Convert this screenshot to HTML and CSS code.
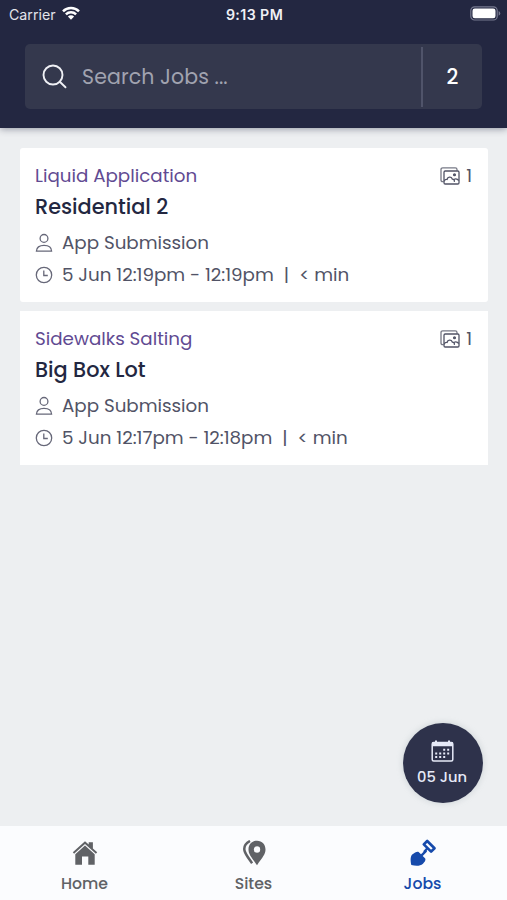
FILE: index.html
```
<!DOCTYPE html>
<html lang="en">
<head>
<meta charset="utf-8">
<meta name="viewport" content="width=device-width, initial-scale=1">
<title>Jobs</title>
<link rel="stylesheet" href="styles.css">
</head>
<body>
<svg class="defs" aria-hidden="true">
  <symbol id="user" viewBox="0 0 18 20"><circle cx="9" cy="5.4" r="3.9"/><path d="M1.400 18.200c0-3.700 3-5.900 7.600-5.900s7.600 2.200 7.600 5.900z"/></symbol>
  <symbol id="clock" viewBox="0 0 18 18"><circle cx="9" cy="9" r="7.700"/><path d="M8.800 4.500v5h4"/></symbol>
  <symbol id="photos" viewBox="0 0 20 18"><path class="back" d="M3.500 14.700H2.700Q1 14.700 1 13V2.500Q1 .8 2.800 .8h12.500q1.700 0 1.700 1.700v1.300"/><rect x="4" y="4" width="15" height="13" rx="1.200"/><path d="M4.200 14.300c.4-1.500 1.600-2.100 2.900-1.900.5-2.500 4.100-3.200 5.200-.3 1.600 0 2.400 1.400 2 2.800M13.200 13.200c1.200-1.900 3.900-1.900 5.600.3"/><circle class="dot" cx="14.500" cy="7.800" r=".9"/></symbol>
</svg>
<div class="app">
  <header class="header">
    <div class="status">
      <div class="carrier"><span>Carrier</span>
        <svg width="18" height="14" viewBox="0 0 18 14"><path d="M1 5.400a11.400 11.400 0 0 1 16 0M3.900 8.300a7.300 7.300 0 0 1 10.200 0" fill="none" stroke="#fff" stroke-width="2.500"/><path d="M9 13.800 5.900 10.600a4.400 4.400 0 0 1 6.200 0z" fill="#fff"/></svg>
      </div>
      <div class="time">9:13 PM</div>
      <svg class="battery" width="31" height="15" viewBox="0 0 31 15"><rect x=".8" y=".8" width="26.400" height="13.200" rx="3.800" fill="none" stroke="#777a90" stroke-width="1.200"/><rect x="2.500" y="2.500" width="23" height="9.800" rx="2.300" fill="#fff"/><path d="M28.600 5q1.700 1 1.700 2.400t-1.700 2.400z" fill="#777a90"/></svg>
    </div>
    <div class="search">
      <svg class="lens" width="26" height="26" viewBox="0 0 26 26"><circle cx="11" cy="11" r="9.500"/><path d="m17.800 17.800 5.700 5.500"/></svg>
      <span class="placeholder">Search Jobs ...</span>
      <span class="divider"></span>
      <span class="count">2</span>
    </div>
  </header>
  <main class="list">
    <article class="card">
      <div class="top"><span class="type">Liquid Application</span><span class="photos"><svg width="20" height="18"><use href="#photos"/></svg><span>1</span></span></div>
      <h2 class="site">Residential 2</h2>
      <div class="row"><svg width="18" height="20"><use href="#user"/></svg><span>App Submission</span></div>
      <div class="row"><svg width="18" height="18"><use href="#clock"/></svg><span>5 Jun 12:19pm - 12:19pm</span><span class="pipe">|</span><span>&lt; min</span></div>
    </article>
    <article class="card">
      <div class="top"><span class="type">Sidewalks Salting</span><span class="photos"><svg width="20" height="18"><use href="#photos"/></svg><span>1</span></span></div>
      <h2 class="site">Big Box Lot</h2>
      <div class="row"><svg width="18" height="20"><use href="#user"/></svg><span>App Submission</span></div>
      <div class="row"><svg width="18" height="18"><use href="#clock"/></svg><span>5 Jun 12:17pm - 12:18pm</span><span class="pipe">|</span><span>&lt; min</span></div>
    </article>
  </main>
  <button class="fab">
    <svg width="23" height="22" viewBox="0 0 23 22"><rect x="1.200" y="2.500" width="20.600" height="18.500" rx="1.500" fill="none" stroke="#e6eaf8" stroke-width="1.500"/><path d="M1 2.500h3V.5h2v2h11v-2h2v2h3v3.700H1z" fill="#e6eaf8"/><path d="M12.200 9.700h2m2 0h2M4.200 13.400h2m2 0h2m2 0h2m2 0h2M4.200 17h2m2 0h2m2 0h2" stroke="#e6eaf8" stroke-width="2"/></svg>
    <span>05 Jun</span>
  </button>
  <nav class="tabs">
    <a class="tab"><svg width="26" height="26" viewBox="0 0 26 26"><path d="m.8 12.300 12.200-11 3.700 3.300V2.200h4.200v6.200l4.300 3.900-1.300 1.400L13 4 2.100 13.700z"/><path d="M3.300 14.200 13 5.600l9.700 8.600v10.500h-6.400v-8.200H10v8.200H3.300z"/></svg><span>Home</span></a>
    <a class="tab"><svg width="26" height="26" viewBox="0 0 26 26"><path fill-rule="evenodd" d="M16 .8c5.200 0 8.500 3.800 8.500 8.700 0 4.800-2.800 7.500-8.500 15.700C10.300 17 7.500 14.300 7.500 9.500 7.500 4.600 10.800.8 16 .8zm0 5.500a3.200 3.200 0 1 0 0 6.400 3.200 3.200 0 0 0 0-6.400z"/><path d="M9 1C5 3.200 2.500 6.200 3.500 10.600c.8 3.600 4.400 8 7.600 12.700" fill="none" stroke="currentColor" stroke-width="2.500"/></svg><span>Sites</span></a>
    <a class="tab active"><svg width="28" height="28" viewBox="0 0 28 28"><path d="M3.500 15.300C5.500 13.600 8.300 12 9.600 12.900l2.400 2.300 4.400-4.300 1.700 1.700-4.400 4.400 2.300 2.300c1.200 1.400-.3 3.900-2 5.400-3 2.400-6.600 2.300-11.700 1.400-1-4.900-1-8.800 1.200-10.800z"/><path d="m14.800 5.400 3.400-3.400 7.300 7.200-3.400 3.400z" fill="none" stroke="currentColor" stroke-width="2.700" stroke-linejoin="round"/><path d="m15 13 3.700-4" stroke="currentColor" stroke-width="2.300"/></svg><span>Jobs</span></a>
  </nav>
</div>
</body>
</html>
```
FILE: styles.css
```
* { box-sizing: border-box; }
body { margin: 0; font-family: Poppins, Inter, "Open Sans", sans-serif; }
.defs { position: absolute; width: 0; height: 0; }
svg { display: block; flex: none; }
.app { position: relative; display: flex; flex-direction: column; width: 507px; height: 900px; background: #edeff1; overflow: hidden; }
.header { height: 128px; background: #232741; box-shadow: 0 1px 7px rgba(35, 39, 65, .45); }
.status { display: grid; grid-template-columns: 1fr auto 1fr; align-items: center; height: 28px; padding: 0 7px 0 9px; color: #fff; font-family: Inter, sans-serif; font-size: 14.200px; }
.carrier { display: flex; align-items: center; gap: 5px; color: #e3e4eb; }
.carrier span { width: 48px; white-space: nowrap; }
.carrier svg { position: relative; top: -1px; }
.time { color: #f0f1f5; font-weight: 600; letter-spacing: .4px; }
.battery { justify-self: end; position: relative; top: -1px; left: 1px; }
.search { display: flex; align-items: center; height: 65px; margin: 16px 25px 0; padding-left: 17px; border-radius: 5px; background: #34384d; }
.lens { fill: none; stroke: #eff0f5; stroke-width: 1.900; stroke-linecap: round; }
.placeholder { flex: 1; margin-left: 14px; color: #a1a3b0; font-size: 20.500px; letter-spacing: .1px; white-space: nowrap; }
.divider { width: 2px; height: 60px; background: #50546a; }
.count { width: 59px; text-align: center; color: #fff; font-size: 20.500px; font-weight: 500; }
.list { display: flex; flex: 1; flex-direction: column; gap: 9px; padding: 20px 19px 0 20px; }
.card { height: 154px; padding: 13px 15px 0; background: #fff; color: #515366; font-size: 18.300px; }
.card:first-child { border-radius: 3px; }
.top { display: flex; justify-content: space-between; height: 30px; line-height: 30px; }
.type { color: #614a92; }
.photos { display: flex; align-items: center; gap: 6px; padding-right: 1px; }
.card svg { fill: none; stroke: #676879; stroke-width: 1.300; }
.card .photos svg { stroke: #515366; }
.dot { fill: #676879; }
.back { stroke: #777986; }
.site { height: 36px; margin: 0; color: #232741; font-size: 20.800px; font-weight: 500; line-height: 32px; }
.row { display: flex; align-items: center; height: 32px; white-space: nowrap; line-height: 32px; }
.row svg { margin-right: 9px; }
.pipe { margin: 0 10px; }
.fab { position: absolute; top: 723px; left: 403px; display: flex; flex-direction: column; align-items: center; width: 80px; height: 80px; padding: 17px 0 0; gap: 5px; border: 0; border-radius: 50%; background: #2e324b; box-shadow: 0 0 6px rgba(150, 165, 170, .4); color: #e6eaf8; font: 500 14.700px/20px Poppins, Inter, sans-serif; }
.fab svg, .fab span { position: relative; left: -1px; }
.tabs { display: flex; height: 74px; background: #fbfcfe; }
.tab { display: flex; flex: 1; flex-direction: column; align-items: center; justify-content: flex-end; height: 68px; color: #606266; font-size: 15.700px; font-weight: 500; line-height: 20px; }
.tab svg { position: relative; top: -1px; margin-bottom: 7px; fill: currentColor; }
.tab.active { color: #164aab; }
.tab.active svg { margin-bottom: 6px; }
```
